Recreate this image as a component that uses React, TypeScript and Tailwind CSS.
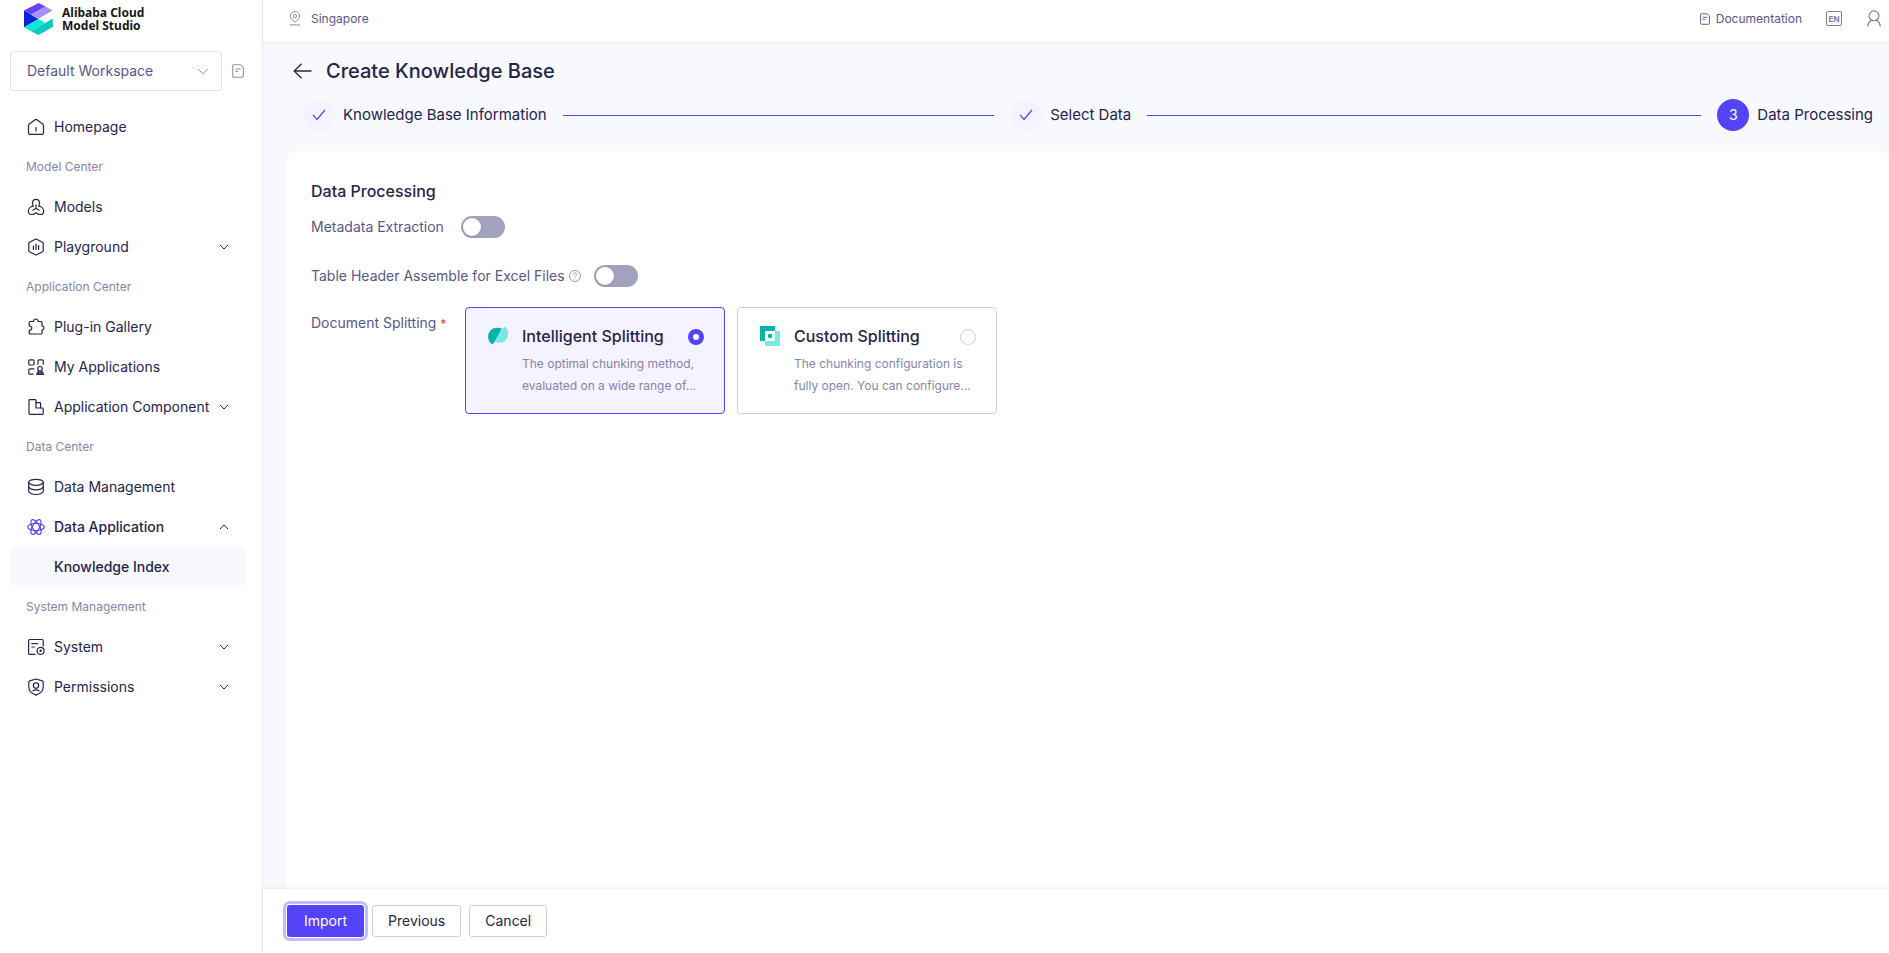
import { useState } from 'react';
import type { ReactNode } from 'react';

type NavEntry = {
  label: string;
  icon?: ReactNode;
  expand?: 'open' | 'closed';
  bold?: boolean;
  active?: boolean;
};

type NavGroup = { title?: string; items: NavEntry[] };

function Icon({ children, className = 'w-[18px] h-[18px]' }: { children: ReactNode; className?: string }) {
  return (
    <svg
      viewBox="0 0 18 18"
      className={`shrink-0 ${className}`}
      fill="none"
      stroke="currentColor"
      strokeWidth="1.2"
      strokeLinecap="round"
      strokeLinejoin="round"
      aria-hidden="true"
    >
      {children}
    </svg>
  );
}

const homeIcon = (
  <Icon>
    <path d="M1.500 7.600c0-.7.3-1.200.8-1.600L7.700 1.900c.8-.6 1.800-.6 2.600 0L15.700 6c.5.400.8.900.8 1.600v7.300c0 .8-.6 1.400-1.400 1.400H2.900c-.8 0-1.400-.6-1.400-1.400z" />
    <path d="M9 9.500v3.500" />
  </Icon>
);

const modelsIcon = (
  <Icon>
    <path d="M6.300 8.200C5.700 7.300 5.600 6 5.600 4.600 5.600 2.600 7 1.300 9 1.300s3.400 1.300 3.400 3.300c0 1.400-.1 2.700-.7 3.600 2.700.3 5 2.500 5 5 0 2-1.300 3.300-3.300 3.300-1.900 0-3.200-.6-4.400-1.700-1.200 1.100-2.500 1.700-4.400 1.700-2 0-3.300-1.300-3.300-3.300 0-2.500 2.300-4.700 5-5z" />
    <path d="M9 6.800v3.400M9 10.200l-3.200 2M9 10.200l3.200 2" />
  </Icon>
);

const playgroundIcon = (
  <Icon>
    <path d="M8.300 1.200c.4-.2 1-.2 1.400 0l5.800 3.100c.5.3.7.7.7 1.200v7c0 .5-.2.9-.7 1.200l-5.800 3.100c-.4.2-1 .2-1.400 0l-5.800-3.100c-.5-.3-.7-.7-.7-1.200v-7c0-.5.2-.9.7-1.200z" />
    <path d="M6.400 8v3.500M9 6v5.500M11.600 7.500v4" />
  </Icon>
);

const pluginIcon = (
  <Icon>
    <path d="M2.200 4.500c0-.6.4-1 1-1h3.200C6.600 1.900 7.600 1 8.800 1s2.200.9 2.400 2.500H14c.6 0 1 .4 1 1v3.200c1.200.3 2 1.200 2 2.300s-.8 2-2 2.300v2.700c0 .6-.4 1-1 1H3.200c-.6 0-1-.4-1-1v-2.700c1.500.1 2.600-.8 2.600-2.200 0-1.500-1.100-2.400-2.600-2.300z" />
  </Icon>
);

const appsIcon = (
  <Icon>
    <rect x="1.800" y="1.800" width="5.200" height="5.200" rx="1" />
    <path d="M11 6.200V2.800c0-.6.4-1 1-1h3.200c.6 0 1 .4 1 1v3.400" />
    <path d="M7 10.800H2.800c-.6 0-1 .4-1 1v3.400c0 .6.4 1 1 1H6" />
    <circle cx="13" cy="10.800" r="2.300" />
    <path d="M11.800 13l-1.200 1.300L9.800 16.400h6.600l-.8-2.100-1.300-1.300M10.800 14.900h4.600" />
  </Icon>
);

const componentIcon = (
  <Icon>
    <path d="M2.800 1.600h5.400c.5 0 .8.3.8.8V10h6.400c.5 0 .8.3.8.8v4.800c0 .5-.3.8-.8.8H2.800c-.5 0-.8-.3-.8-.8V2.400c0-.5.3-.8.8-.8z" />
    <path d="M9 4.600h3.800c.5 0 .8.300.8.8V10" />
  </Icon>
);

const databaseIcon = (
  <Icon>
    <ellipse cx="9" cy="4.300" rx="7.300" ry="3" />
    <path d="M1.700 4.300v9c0 1.700 3.300 3.200 7.300 3.200s7.300-1.500 7.300-3.200v-9" />
    <path d="M1.700 8.600c0 1.700 3.300 3.200 7.300 3.200s7.300-1.500 7.300-3.200" />
  </Icon>
);

const atomIcon = (
  <Icon className="w-[18px] h-[18px] text-[#5543f8]">
    <ellipse cx="9" cy="9" rx="8.300" ry="3.500" />
    <ellipse cx="9" cy="9" rx="8.300" ry="3.500" transform="rotate(60 9 9)" />
    <ellipse cx="9" cy="9" rx="8.300" ry="3.500" transform="rotate(120 9 9)" />
  </Icon>
);

const systemIcon = (
  <Icon>
    <path d="M16.200 8V2.500c0-.6-.4-1-1-1H2.600c-.6 0-1 .4-1 1v12.900c0 .6.4 1 1 1H8" />
    <path d="M4.800 5.600h5.700M4.800 9h2.700" />
    <circle cx="13.600" cy="12.800" r="3.500" />
    <circle cx="13.600" cy="12.800" r=".6" />
  </Icon>
);

const shieldIcon = (
  <Icon>
    <path d="M9 1l6.300 1.900c.5.200.9.500.9 1v5.300c0 3.500-2.900 6.300-7.200 7.900-4.300-1.600-7.200-4.400-7.200-7.900V3.900c0-.5.4-.8.9-1z" />
    <circle cx="9" cy="7.600" r="2.700" />
    <path d="M6 12.800c1.500-1.300 4.500-1.300 6 0" />
  </Icon>
);

function Chevron({ up = false }: { up?: boolean }) {
  return (
    <svg viewBox="0 0 10 6" className="w-[10px] h-[6px] shrink-0" fill="none" stroke="currentColor" aria-hidden="true">
      <path d={up ? 'M1 5l4-4 4 4' : 'M1 1l4 4 4-4'} />
    </svg>
  );
}

function DocIcon({ className }: { className: string }) {
  return (
    <svg viewBox="0 0 12 14" className={className} fill="none" stroke="currentColor" strokeWidth="1.100" strokeLinejoin="round" aria-hidden="true">
      <path d="M1.600.7h6.800l2.900 2.700v8.900c0 .6-.4 1-1 1H1.600c-.5 0-.9-.4-.9-1V1.700c0-.6.4-1 .9-1z" />
      <path d="M3.200 5h5.400M3.200 7.500h3" />
    </svg>
  );
}

function Logo() {
  return (
    <svg viewBox="0 0 29 32" className="w-[29px] h-8" aria-hidden="true">
      <path d="M0 7.500L14.500 16 0 24.200z" fill="#0a22d8" />
      <path d="M0 7.500L14.500 0l7 3.500L7 11.700z" fill="#6a41f6" />
      <path d="M21.500 3.500l7 4L14.500 15.800 7 11.700z" fill="#a592fb" />
      <path d="M0 24.200L14.500 16l6.500 3.900L28.800 15.500 7 28.200z" fill="#0aead0" />
      <path d="M7 28.200L28.800 15.500v8.600L14.500 32z" fill="#0bcbc0" />
    </svg>
  );
}

const navGroups: NavGroup[] = [
  { items: [{ label: 'Homepage', icon: homeIcon }] },
  {
    title: 'Model Center',
    items: [
      { label: 'Models', icon: modelsIcon },
      { label: 'Playground', icon: playgroundIcon, expand: 'closed' },
    ],
  },
  {
    title: 'Application Center',
    items: [
      { label: 'Plug-in Gallery', icon: pluginIcon },
      { label: 'My Applications', icon: appsIcon },
      { label: 'Application Component', icon: componentIcon, expand: 'closed' },
    ],
  },
  {
    title: 'Data Center',
    items: [
      { label: 'Data Management', icon: databaseIcon },
      { label: 'Data Application', icon: atomIcon, expand: 'open', bold: true },
      { label: 'Knowledge Index', active: true, bold: true },
    ],
  },
  {
    title: 'System Management',
    items: [
      { label: 'System', icon: systemIcon, expand: 'closed' },
      { label: 'Permissions', icon: shieldIcon, expand: 'closed' },
    ],
  },
];

function NavItem({ item }: { item: NavEntry }) {
  const cls = `flex items-center w-full h-10 pl-[17px] pr-[17px] rounded-lg text-sm text-left whitespace-nowrap ${
    item.bold ? 'font-medium' : ''
  } ${item.active ? 'bg-[#f7f9fd]' : ''}`;
  const body = (
    <>
      <span className="w-[18px] mr-[9px] shrink-0">{item.icon}</span>
      <span className="flex-1">{item.label}</span>
      {item.expand && <Chevron up={item.expand === 'open'} />}
    </>
  );

  if (item.expand) {
    return (
      <button type="button" aria-expanded={item.expand === 'open'} className={cls}>
        {body}
      </button>
    );
  }
  return (
    <a href="#" className={cls}>
      {body}
    </a>
  );
}

function Sidebar() {
  return (
    <aside className="w-[263px] shrink-0 bg-white border-r border-[#e8e9f0]">
      <a href="#" className="flex items-center gap-[9px] h-9 pl-6 pt-0.5">
        <Logo />
        <span className="flex flex-col font-['Noto_Sans','Open_Sans',sans-serif] font-bold text-xs leading-[13px] text-[#181818]">
          <span>Alibaba Cloud</span>
          <span>Model Studio</span>
        </span>
      </a>

      <div className="flex items-center gap-[10px] pl-[10px] pt-[15px]">
        <div className="relative w-[212px]">
          <select
            aria-label="Workspace"
            className="appearance-none w-full h-10 pl-4 pr-8 rounded border border-[#e0e1e8] bg-white text-sm text-[#58568a]"
          >
            <option>Default Workspace</option>
          </select>
          <svg viewBox="0 0 12 7" className="absolute right-[13px] top-[17px] w-3 h-[7px] text-[#9c9bbb] pointer-events-none" fill="none" stroke="currentColor" aria-hidden="true">
            <path d="M1 1l5 5 5-5" />
          </svg>
        </div>
        <button type="button" aria-label="Workspace details" className="text-[#9493b3]">
          <DocIcon className="w-3 h-[14px]" />
        </button>
      </div>

      <nav className="pl-[10px] pr-4 pt-4">
        {navGroups.map((group, i) => (
          <div key={i}>
            {group.title && <div className="h-10 pl-4 text-xs leading-10 text-[#8586ab]">{group.title}</div>}
            {group.items.map((item) => (
              <NavItem key={item.label} item={item} />
            ))}
          </div>
        ))}
      </nav>
    </aside>
  );
}

function TopBar() {
  return (
    <header className="flex items-center justify-between h-[43px] pl-[26px] pr-2 pb-[5px] bg-white border-b border-[#eff0f4] text-xs text-[#58568a]">
      <div className="flex items-center gap-[10px]">
        <svg viewBox="0 0 12 15" className="w-3 h-[15px] text-[#8b8aac]" fill="none" stroke="currentColor" aria-hidden="true">
          <path d="M6 11.300C3.300 9.200 1.400 7.400 1.400 5.100a4.600 4.600 0 019.200 0c0 2.300-1.900 4.100-4.600 6.200z" />
          <circle cx="6" cy="5.100" r="1.600" />
          <path d="M1 13.900h10" />
        </svg>
        <span>Singapore</span>
      </div>
      <div className="flex items-center">
        <a href="#" className="flex items-center gap-[6px]">
          <DocIcon className="w-[10px] h-3" />
          Documentation
        </a>
        <button type="button" aria-label="Language" className="ml-6 text-[#7d7ca3]">
          <span className="flex items-center justify-center w-4 h-[15px] rounded-xs border border-current text-[8px] leading-none font-bold">
            EN
          </span>
        </button>
        <button type="button" aria-label="Account" className="ml-[25px] text-[#7d7ca3]">
          <svg viewBox="0 0 14 17" className="w-[14px] h-[17px]" fill="none" stroke="currentColor" strokeWidth="1.200" strokeLinecap="round" aria-hidden="true">
            <circle cx="7" cy="5.800" r="4.900" />
            <path d="M4.400 10.200C2.200 11.500 1 13.500.8 16M9.600 10.200c2.200 1.300 3.400 3.300 3.600 5.800" />
          </svg>
        </button>
      </div>
    </header>
  );
}

const steps = ['Knowledge Base Information', 'Select Data', 'Data Processing'];

function Steps() {
  return (
    <ol className="flex px-4 text-[15px]">
      {steps.map((step, i) => {
        const last = i === steps.length - 1;
        return (
          <li key={step} className={`flex items-center whitespace-nowrap ${last ? '' : 'flex-1'}`}>
            <span
              className={`flex items-center justify-center size-8 mr-2 rounded-full text-sm ${
                last ? 'bg-[#5543f8] text-white' : 'bg-[#f5f3ff] text-[#5543f8]'
              }`}
            >
              {last ? (
                i + 1
              ) : (
                <svg viewBox="0 0 14 12" className="w-[14px] h-3" fill="none" stroke="currentColor" strokeWidth="1.200" aria-hidden="true">
                  <path d="M1 5.800L5 10.500 13 1" />
                </svg>
              )}
            </span>
            {step}
            {!last && <span className="flex-1 h-px mx-4 bg-[#5543f8]" />}
          </li>
        );
      })}
    </ol>
  );
}

function Switch({ id }: { id: string }) {
  return (
    <input
      id={id}
      type="checkbox"
      role="switch"
      className="appearance-none w-11 h-[22px] p-0.5 rounded-full bg-[#a3a2be] checked:bg-[#5543f8] before:block before:size-[18px] before:rounded-full before:bg-white before:shadow-sm checked:before:translate-x-[22px]"
    />
  );
}

function IntelligentIcon() {
  return (
    <svg viewBox="0 0 20 20" className="size-5 shrink-0" aria-hidden="true">
      <path d="M16.300.6C19 2.300 20.200 4.800 20.200 7.600c0 5.300-3.700 9.200-9 9.200-2.200 0-4.200-.6-5.700-1.700L13.800 3c1.200-.3 2.200-1 2.500-2.400z" fill="#7ae7e0" />
      <path d="M13.800 2.600L4.800 18.600C1.700 16.900.1 14.100.1 10.900c0-5.200 3.700-9.200 8.600-9.200 2 0 3.700.2 5.100.9z" fill="#03b3ae" />
    </svg>
  );
}

function CustomIcon() {
  return (
    <svg viewBox="0 0 20 20" className="size-5 shrink-0" aria-hidden="true">
      <path d="M5 5h15v15H5z" fill="#78eae3" />
      <path d="M0 0h15v5H5v10H0z" fill="#03b3ae" />
      <path d="M5 5h10v10H5z" fill="#fff" />
      <circle cx="10" cy="10" r="2.200" fill="#03b3ae" />
    </svg>
  );
}

const splittingModes = [
  {
    id: 'intelligent',
    title: 'Intelligent Splitting',
    lines: ['The optimal chunking method,', 'evaluated on a wide range of...'],
    icon: <IntelligentIcon />,
  },
  {
    id: 'custom',
    title: 'Custom Splitting',
    lines: ['The chunking configuration is', 'fully open. You can configure...'],
    icon: <CustomIcon />,
  },
];

function SplittingCards() {
  const [mode, setMode] = useState('intelligent');

  return (
    <div className="flex flex-wrap gap-3">
      {splittingModes.map((m) => (
        <label
          key={m.id}
          className={`flex w-[260px] h-[107px] pl-[22px] pr-5 pt-4 rounded border ${
            mode === m.id ? 'border-[#5543f8] bg-[#f5f3ff]' : 'border-[#d0cfe0] bg-white'
          }`}
        >
          <span className="mt-0.5 mr-[14px]">{m.icon}</span>
          <span className="flex-1 whitespace-nowrap">
            <span className="flex items-center justify-between">
              <span className="text-base font-medium text-[#26244c]">{m.title}</span>
              <input
                type="radio"
                name="splitting"
                checked={mode === m.id}
                onChange={() => setMode(m.id)}
                className="appearance-none size-4 mt-0.5 rounded-full bg-white border border-[#d0cfe0] checked:border-[5px] checked:border-[#5543f8]"
              />
            </span>
            <span className="block mt-[5px] text-xs leading-[22px] text-[#8586ab]">
              {m.lines[0]}
              <br />
              {m.lines[1]}
            </span>
          </span>
        </label>
      ))}
    </div>
  );
}

export default function App() {
  return (
    <div className="flex min-h-screen bg-white font-[Inter,'Liberation_Sans',sans-serif] text-[#26244c]">
      <Sidebar />

      <div className="flex flex-col flex-1 min-w-0">
        <TopBar />

        <main className="flex flex-col flex-1 pl-6 pt-[14px] bg-[#f7f9fd]">
          <div className="flex items-center gap-[14px] pl-[6px] h-7">
            <button type="button" aria-label="Back">
              <svg viewBox="0 0 19 16" className="w-[19px] h-4" fill="none" stroke="currentColor" strokeWidth="1.300" aria-hidden="true">
                <path d="M8.500.8L1.200 8l7.300 7.200M1.200 8H18.500" />
              </svg>
            </button>
            <h1 className="text-xl font-medium">Create Knowledge Base</h1>
          </div>

          <div className="mt-[14px]">
            <Steps />
          </div>

          <section className="flex-1 mt-5 px-6 pt-7 bg-white rounded-t-lg text-sm text-[#58568a]">
            <h2 className="text-base font-medium text-[#26244c]">Data Processing</h2>

            <div className="flex items-center h-[22px] mt-[13px]">
              <label htmlFor="metadata" className="w-[150px]">
                Metadata Extraction
              </label>
              <Switch id="metadata" />
            </div>

            <div className="flex items-center h-[22px] mt-[27px]">
              <span className="flex items-center gap-1 w-[283px] whitespace-nowrap">
                <label htmlFor="header">Table Header Assemble for Excel Files</label>
                <svg viewBox="0 0 12 12" className="size-3 text-[#8b8aac]" fill="none" stroke="currentColor" strokeWidth=".9" aria-hidden="true">
                  <circle cx="6" cy="6" r="5.500" />
                  <path d="M4.400 4.700c0-1 .7-1.600 1.600-1.600s1.600.6 1.600 1.400c0 1.100-1.600 1.200-1.600 2.600M6 8.200v1" />
                </svg>
              </span>
              <Switch id="header" />
            </div>

            <div className="flex mt-5">
              <div className="w-[154px] shrink-0 pt-[6px]">
                Document Splitting <span className="text-[#ff3347] text-xs">*</span>
              </div>
              <SplittingCards />
            </div>
          </section>
        </main>

        <footer className="relative flex gap-2 pl-6 py-4 bg-white shadow-[0_-1px_4px_rgba(38,36,76,0.08)] text-sm">
          <button type="button" className="h-8 px-[17px] rounded-[3px] bg-[#5543f8] text-white outline-[3px] outline-offset-1 outline-[#c1bbfc]">
            Import
          </button>
          <button type="button" className="h-8 px-[15px] rounded-[3px] border border-[#d0cfe0]">
            Previous
          </button>
          <button type="button" className="h-8 px-[15px] rounded-[3px] border border-[#d0cfe0]">
            Cancel
          </button>
        </footer>
      </div>
    </div>
  );
}
